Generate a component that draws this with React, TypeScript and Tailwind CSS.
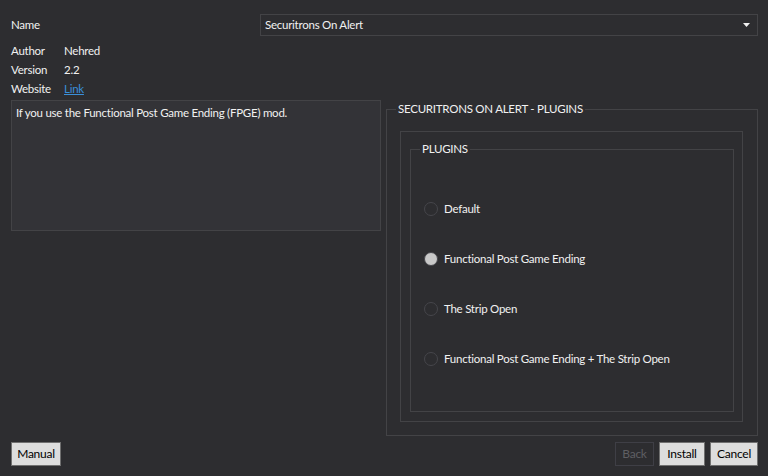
import React from "react";

const font = { fontFamily: 'Lato, "Noto Sans", sans-serif', letterSpacing: "-0.25px" };

function Radio({ label, checked }: { label: string; checked?: boolean }) {
  return (
    <div className="flex h-[50px] items-center">
      <span
        className={
          checked
            ? "h-[14px] w-[14px] shrink-0 rounded-full border border-[#46464b] bg-[#c8c8c8]"
            : "h-[14px] w-[14px] shrink-0 rounded-full border border-[#46464b] bg-[#2d2d30]"
        }
      />
      <span className="ml-[6px] leading-[16px]">{label}</span>
    </div>
  );
}

export default function App() {
  return (
    <div
      className="flex h-[476px] w-[768px] flex-col bg-[#2d2d30] text-[11.5px] text-[#f1f1f1]"
      style={font}
    >
      {/* Name row */}
      <div className="flex items-center pl-[11px] pt-[14px]">
        <span className="w-[249px] leading-[16px]">Name</span>
        <div className="flex h-[22px] w-[498px] items-center justify-between border border-[#434346] bg-[#2d2d30] pl-[4px] pr-[7px]">
          <span className="leading-[16px]">Securitrons On Alert</span>
          <svg width="7" height="4" viewBox="0 0 7 4">
            <path d="M0 0H7L3.5 4Z" fill="#f1f1f1" />
          </svg>
        </div>
      </div>

      {/* Info rows */}
      <div className="mt-[5px] flex flex-col pl-[11px]">
        <div className="flex h-[19px] items-center">
          <span className="w-[53px]">Author</span>
          <span>Nehred</span>
        </div>
        <div className="flex h-[19px] items-center">
          <span className="w-[53px]">Version</span>
          <span>2.2</span>
        </div>
        <div className="flex h-[19px] items-center">
          <span className="w-[53px]">Website</span>
          <span className="text-[#3a8fd9] underline">Link</span>
        </div>
      </div>

      {/* Main */}
      <div className="mt-[2px] flex pl-[11px]">
        <div className="h-[131px] w-[370px] border border-[#434346] bg-[#333337] px-[4px] pt-[3px]">
          <span className="leading-[16px]">If you use the Functional Post Game Ending (FPGE) mod.</span>
        </div>
        <div className="relative ml-[5px] mt-[9px] flex h-[327px] w-[372px] border border-[#434346] pb-[13px] pl-[13px] pr-[14px] pt-[21px]">
          <span className="absolute left-[9px] top-[-9px] bg-[#2d2d30] px-[2px] leading-[16px]">
            SECURITRONS ON ALERT - PLUGINS
          </span>
          <div className="flex flex-1 border border-[#434346] pb-[9px] pl-[9px] pr-[8px] pt-[17px]">
            <div className="relative flex flex-1 flex-col border border-[#434346] pl-[13px] pt-[34px]">
              <span className="absolute left-[9px] top-[-9px] bg-[#2d2d30] px-[2px] leading-[16px]">
                PLUGINS
              </span>
              <Radio label="Default" />
              <Radio label="Functional Post Game Ending" checked />
              <Radio label="The Strip Open" />
              <Radio label="Functional Post Game Ending + The Strip Open" />
            </div>
          </div>
        </div>
      </div>

      {/* Buttons */}
      <div className="mt-[6px] flex items-center justify-between pl-[11px] pr-[10px]">
        <button className="h-[24px] w-[50px] border border-[#707070] bg-[#dddddd] text-[12px] text-black">
          Manual
        </button>
        <div className="flex gap-[5px]">
          <button className="h-[24px] w-[39px] border border-[#3f3f46] bg-[#2d2d30] text-[12px] text-[#5f5f63]">
            Back
          </button>
          <button className="h-[24px] w-[46px] border border-[#707070] bg-[#dddddd] text-[12px] text-black">
            Install
          </button>
          <button className="h-[24px] w-[48px] border border-[#707070] bg-[#dddddd] text-[12px] text-black">
            Cancel
          </button>
        </div>
      </div>
    </div>
  );
}
